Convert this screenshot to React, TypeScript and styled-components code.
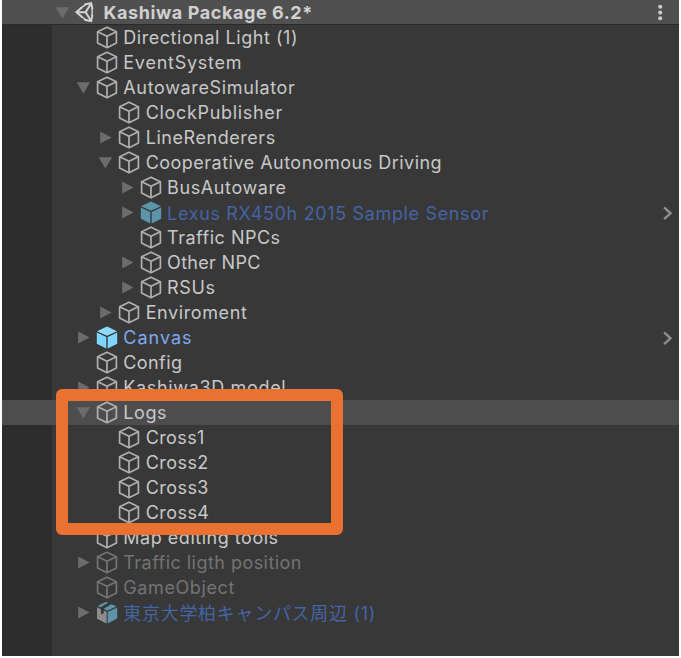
import React from "react";
import styled, { createGlobalStyle } from "styled-components";

const GlobalStyle = createGlobalStyle`
  html, body { margin: 0; background: #fff; }
  * { box-sizing: border-box; }
`;

const Panel = styled.main`
  position: relative;
  width: 677px;
  height: 656px;
  margin-left: 2px;
  overflow: hidden;
  background: linear-gradient(to right, #2d2d2d 50px, #383838 50px);
  font-family: Inter, "Noto Sans CJK JP", sans-serif;
`;

const Header = styled.header`
  display: flex;
  align-items: center;
  height: 25px;
  padding: 0 14px 0 52px;
  background: #505050;
  border-bottom: 1px solid #292929;
`;

const Title = styled.h1<{ $spacing: number }>`
  flex: 1;
  margin: 0 0 0 8.5px;
  padding-top: 1px;
  color: #d0d0d0;
  font-size: 18px;
  font-weight: 700;
  line-height: 24px;
  letter-spacing: ${(p) => p.$spacing}px;
  white-space: nowrap;
`;

const Row = styled.div<{ $depth: number; $selected?: boolean }>`
  display: flex;
  align-items: center;
  height: 25px;
  padding-left: ${(p) => [73, 95, 117.3][p.$depth]}px;
  padding-right: 5px;
  background: ${(p) => (p.$selected ? "#4d4d4d" : "transparent")};
`;

const Label = styled.span<{ $color: string; $spacing: number; $depth: number; $lowered: boolean }>`
  flex: 1;
  margin-left: ${(p) => [5.3, 5.7, 4.8][p.$depth]}px;
  padding-top: ${(p) => (p.$lowered ? 2 : 0)}px;
  color: ${(p) => p.$color};
  font-size: 18px;
  line-height: 25px;
  letter-spacing: ${(p) => p.$spacing}px;
  white-space: nowrap;
`;

const Icon = styled.svg`
  display: block;
  flex: none;
`;

const Highlight = styled.div`
  position: absolute;
  left: 53.5px;
  top: 388.5px;
  width: 287px;
  height: 146.5px;
  border: 12px solid #e97132;
  border-radius: 6px;
`;

type Fold = "open" | "closed" | "none";
type Kind = "cube" | "prefab" | "model";
type Tone = "normal" | "prefab" | "off" | "prefabOff";

const textColor: Record<Tone, string> = {
  normal: "#c8c8c8",
  prefab: "#7da9f0",
  off: "#737373",
  prefabOff: "#4464a4",
};

function Arrow({ fold }: { fold: Fold }) {
  return (
    <Icon width="21" height="25" viewBox="0 0 21 25">
      {fold === "open" && <path d="M1.7 7.2h13.4L8.4 18.4z" fill="#6c6c6c" />}
      {fold === "closed" && <path d="M3.2 6.4v12.2L14.6 12.4z" fill="#6c6c6c" />}
    </Icon>
  );
}

function ObjectIcon({ kind, tone }: { kind: Kind; tone: Tone }) {
  const faded = tone === "off" || tone === "prefabOff";
  if (kind === "prefab") {
    return (
      <Icon width="22" height="25" viewBox="0 0 22 25">
        <path d="M1 6.2 11 1.6l10 4.6L11 10.8z" fill={faded ? "#5c94a9" : "#8edbff"} />
        <path d="M.8 7.5 10.3 11.9v11.6L.8 18.8z" fill={faded ? "#5c94a9" : "#7fd6fd"} />
        <path d="M21.2 7.5 11.7 11.9v11.6l9.5-4.7z" fill={faded ? "#5c94a9" : "#7fd6fd"} />
      </Icon>
    );
  }
  if (kind === "model") {
    return (
      <Icon width="22" height="25" viewBox="0 0 22 25">
        <path d="M1 7.3 5 9.2v5.4l2.8-1.4v-2.6l2.8 1.3v11.6L1 18.8z" fill="#8c8c8c" />
        <path d="M1.6 6 10 1.8l2.2 1L4.6 7.3zM7.6 8.7l7.7-4.4 5.4 2-9.3 4.5z" fill="#5c94a9" />
        <path d="M21.2 7.5v11.1l-9.5 4.9V12z" fill="#5c94a9" />
      </Icon>
    );
  }
  return (
    <Icon width="22" height="25" viewBox="0 0 22 25" fill="none" stroke={faded ? "#747474" : "#b0b0b0"} strokeWidth="1.7" strokeLinejoin="round">
      <path d="M11 2.2 20.4 6.7v11.4L11 22.7l-9.4-4.6V6.7z" />
      <path d="m1.6 6.7 9.4 4.6 9.4-4.6M11 11.3v11.4" />
    </Icon>
  );
}

function SceneLogo() {
  return (
    <Icon width="20" height="24" viewBox="0 0 20 24" fill="none" stroke="#d4d4d4" strokeWidth="2" strokeLinejoin="miter">
      <path d="M7 7.3 1.4 12.2 7 17.1M9.4 4.6l6.8-1.5 1.2 6.2M9.4 19.8l6.8 1.3 1.2-6.2" />
      <path d="M1.8 12.2h9M10.6 12.2l5.2-8.3M10.6 12.2l5.2 8.1" />
      <path d="M5.8 8.2 11 4.4M5.8 16.2l5.2 3.8M17.1 8.5v7.4" strokeWidth="1.5" />
    </Icon>
  );
}

function MoreIcon() {
  return (
    <Icon width="10" height="24" viewBox="0 0 10 24" fill="#cecece">
      <circle cx="5.2" cy="6.8" r="2" />
      <circle cx="5.2" cy="12.5" r="2" />
      <circle cx="5.2" cy="18.2" r="2" />
    </Icon>
  );
}

function Chevron() {
  return (
    <Icon width="12" height="25" viewBox="0 0 12 25" fill="none" stroke="#8e8e8e" strokeWidth="2.4">
      <path d="m2.1 7.4 6.4 5.9-6.4 5.9" />
    </Icon>
  );
}

interface Item {
  name: string;
  depth: number;
  fold?: Fold;
  kind?: Kind;
  tone?: Tone;
  selected?: boolean;
  spacing?: number;
  lowered?: boolean;
}

const items: Item[] = [
  { name: "Directional Light (1)", depth: 0, spacing: 0.54 },
  { name: "EventSystem", depth: 0, spacing: 0.75 },
  { name: "AutowareSimulator", depth: 0, fold: "open", spacing: 0.65 },
  { name: "ClockPublisher", depth: 1, spacing: 0.67 },
  { name: "LineRenderers", depth: 1, fold: "closed", spacing: 0.55 },
  { name: "Cooperative Autonomous Driving", depth: 1, fold: "open", spacing: 0.48 },
  { name: "BusAutoware", depth: 2, fold: "closed" },
  { name: "Lexus RX450h 2015 Sample Sensor", depth: 2, fold: "closed", kind: "prefab", tone: "prefabOff", spacing: 0.65, lowered: true },
  { name: "Traffic NPCs", depth: 2, spacing: 0.5 },
  { name: "Other NPC", depth: 2, fold: "closed", spacing: 0.3 },
  { name: "RSUs", depth: 2, fold: "closed", spacing: 0.6 },
  { name: "Enviroment", depth: 1, fold: "closed" },
  { name: "Canvas", depth: 0, fold: "closed", kind: "prefab", tone: "prefab", spacing: 1 },
  { name: "Config", depth: 0, spacing: 0.4 },
  { name: "Kashiwa3D model", depth: 0, fold: "closed", spacing: 0.66 },
  { name: "Logs", depth: 0, fold: "open", selected: true },
  { name: "Cross1", depth: 1, spacing: 0.4 },
  { name: "Cross2", depth: 1, spacing: 0.45 },
  { name: "Cross3", depth: 1, spacing: 0.45 },
  { name: "Cross4", depth: 1, spacing: 0.45 },
  { name: "Map editing tools", depth: 0, spacing: 0.52 },
  { name: "Traffic ligth position", depth: 0, fold: "closed", tone: "off", spacing: 0.46 },
  { name: "GameObject", depth: 0, tone: "off", spacing: 0.6 },
  { name: "東京大学柏キャンパス周辺 (1)", depth: 0, fold: "closed", kind: "model", tone: "prefabOff", spacing: 0.7, lowered: true },
];

function TreeRow({ item }: { item: Item }) {
  const { name, depth, fold = "none", kind = "cube", tone = "normal", selected, spacing = 0.6, lowered = false } = item;
  return (
    <Row $depth={depth} $selected={selected}>
      <Arrow fold={fold} />
      <ObjectIcon kind={kind} tone={tone} />
      <Label $color={textColor[tone]} $spacing={spacing} $depth={depth} $lowered={lowered}>{name}</Label>
      {kind === "prefab" && <Chevron />}
    </Row>
  );
}

export default function App() {
  return (
    <>
      <GlobalStyle />
      <Panel>
        <Header>
          <Arrow fold="open" />
          <SceneLogo />
          <Title $spacing={0.58}>Kashiwa Package 6.2*</Title>
          <MoreIcon />
        </Header>
        {items.map((item) => (
          <TreeRow key={item.name} item={item} />
        ))}
        <Highlight />
      </Panel>
    </>
  );
}
